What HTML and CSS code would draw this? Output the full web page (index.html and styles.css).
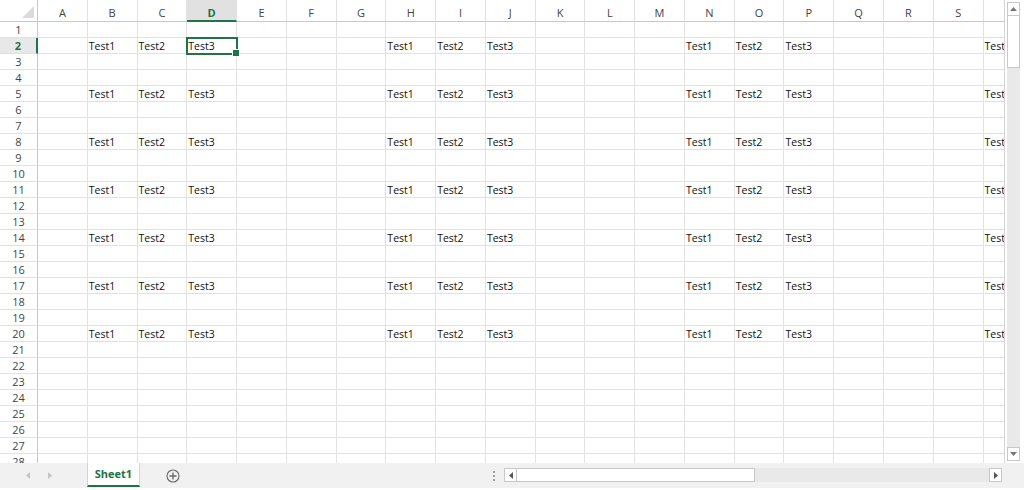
FILE: index.html
```html
<!DOCTYPE html>
<html>
<head>
<meta charset="utf-8">
<link rel="stylesheet" href="styles.css">
</head>
<body>
<div class="app">
  <div class="main">
    <div class="sheet" id="sheet"></div>
    <div class="vscroll">
      <div class="vbtn up"><svg width="7" height="4" viewBox="0 0 7 4"><path d="M0 4 L3.5 0 L7 4Z" fill="#777"/></svg></div>
      <div class="vthumb"></div>
      <div class="vtrack"></div>
      <div class="vbtn down"><svg width="7" height="4" viewBox="0 0 7 4"><path d="M0 0 L3.5 4 L7 0Z" fill="#777"/></svg></div>
    </div>
  </div>
  <div class="tabbar">
    <div class="nav">
      <svg width="4" height="7" viewBox="0 0 4 7"><path d="M4 0 L0 3.5 L4 7Z" fill="#c4c4c4"/></svg>
      <svg width="4" height="7" viewBox="0 0 4 7"><path d="M0 0 L4 3.5 L0 7Z" fill="#c4c4c4"/></svg>
    </div>
    <div class="tab">Sheet1</div>
    <div class="add">
      <svg width="14" height="14" viewBox="0 0 14 14"><circle cx="7" cy="7" r="6" fill="none" stroke="#666" stroke-width="1.1"/><path d="M7 3.5 V10.5 M3.5 7 H10.5" stroke="#666" stroke-width="1.3"/></svg>
    </div>
    <div class="splitter"><span></span><span></span><span></span></div>
    <div class="hscroll">
      <div class="hbtn"><svg width="4" height="7" viewBox="0 0 4 7"><path d="M4 0 L0 3.5 L4 7Z" fill="#555"/></svg></div>
      <div class="hthumb"></div>
      <div class="htrack"></div>
      <div class="hbtn"><svg width="4" height="7" viewBox="0 0 4 7"><path d="M0 0 L4 3.5 L0 7Z" fill="#555"/></svg></div>
    </div>
  </div>
</div>
<script src="script.js"></script>
</body>
</html>
```
FILE: styles.css
```css
* { box-sizing: border-box; }
html, body { margin: 0; padding: 0; background: #fff; }
body { font-family: "Open Sans", "Noto Sans", sans-serif; }
.app { width: 1024px; height: 490px; display: flex; flex-direction: column; overflow: hidden; }
.main { height: 463px; display: flex; overflow: hidden; }
.sheet {
  width: 1004px; height: 463px; overflow: hidden;
  display: grid;
  grid-template-columns: 38px repeat(19, 49.78px) 50px;
  grid-template-rows: 22px repeat(28, 16px);
  position: relative;
}
.cell {
  border-right: 1px solid #e1e1e1;
  border-bottom: 1px solid #e1e1e1;
  font-size: 10.5px; line-height: 17px;
  color: #111; padding-left: 1px;
  white-space: nowrap; overflow: hidden;
}
.colhead {
  border-right: 1px solid #e1e1e1;
  border-bottom: 1px solid #c8c8c8;
  font-size: 11px; color: #444; text-align: center; line-height: 26px;
}
.colhead.sel { background: #e1e1e1; color: #217346; font-weight: 700; border-bottom: 2px solid #217346; line-height: 25px; }
.rowhead {
  border-right: 1px solid #c8c8c8;
  border-bottom: 1px solid #e1e1e1;
  font-size: 11px; color: #444; text-align: center; line-height: 16px;
}
.rowhead.sel { background: #e8e8e8; color: #217346; font-weight: 700; border-right: 2px solid #217346; }
.corner { border-right: 1px solid #c8c8c8; border-bottom: 1px solid #c8c8c8; position: relative; }
.corner svg { position: absolute; right: 3px; bottom: 3px; }
.cell.active { border: 2px solid #217346; margin: -1px 0 0 -1px; padding-left: 0; line-height: 15px; position: relative; width: 52px; height: 18px; overflow: visible; z-index: 2; }
.cell.active::after { content: ""; position: absolute; right: -4px; bottom: -4px; width: 6px; height: 6px; background: #217346; border: 1px solid #fff; }
.vscroll { width: 20px; height: 463px; border-left: 1px solid #d4d4d4; padding: 2px 4px 2px 2px; display: flex; flex-direction: column; }
.vbtn { height: 14px; border: 1px solid #c8c8c8; background: #fff; display: flex; align-items: center; justify-content: center; }
.vthumb { height: 52px; border: 1px solid #c8c8c8; border-top: none; background: #fff; }
.vtrack { flex: 1; background: #e9e9e9; }
.tabbar { height: 25px; background: #f1f1f1; display: flex; align-items: stretch; }
.nav { width: 87px; display: flex; align-items: center; gap: 18px; padding-left: 26px; }
.tab { width: 53px; background: #fff; color: #217346; font-weight: 700; font-size: 11px; text-align: center; line-height: 22px; border-bottom: 2px solid #217346; border-left: 1px solid #d4d4d4; border-right: 1px solid #d4d4d4; height: 24px; }
.add { width: 66px; display: flex; align-items: center; justify-content: center; }
.splitter { margin-left: 282px; width: 12px; display: flex; flex-direction: column; align-items: center; justify-content: center; gap: 2px; }
.splitter span { width: 2px; height: 2px; background: #a0a0a0; }
.hscroll { width: 498px; height: 14px; margin-top: 5px; margin-left: 4px; display: flex; }
.hbtn { width: 13px; border: 1px solid #c8c8c8; background: #fff; display: flex; align-items: center; justify-content: center; }
.hthumb { width: 238px; border: 1px solid #c8c8c8; border-left: none; background: #fff; }
.htrack { flex: 1; background: #e9e9e9; }
```
FILE: script.js
```js
(function () {
  var sheet = document.getElementById('sheet');
  var cols = 'ABCDEFGHIJKLMNOPQRST'.split('');
  var html = '<div class="corner"><svg width="12" height="12" viewBox="0 0 12 12"><path d="M12 0 V12 H0Z" fill="#dcdcdc"/></svg></div>';
  cols.forEach(function (c) {
    html += '<div class="colhead' + (c === 'D' ? ' sel' : '') + '">' + (c === 'T' ? '' : c) + '</div>';
  });
  var vals = { B: 'Test1', C: 'Test2', D: 'Test3', H: 'Test1', I: 'Test2', J: 'Test3', N: 'Test1', O: 'Test2', P: 'Test3', T: 'Test' };
  for (var r = 1; r <= 28; r++) {
    html += '<div class="rowhead' + (r === 2 ? ' sel' : '') + '">' + r + '</div>';
    var filled = (r - 2) % 3 === 0 && r <= 20;
    cols.forEach(function (c) {
      var active = r === 2 && c === 'D';
      html += '<div class="cell' + (active ? ' active' : '') + '">' + (filled && vals[c] ? vals[c] : '') + '</div>';
    });
  }
  sheet.innerHTML = html;
})();
```
